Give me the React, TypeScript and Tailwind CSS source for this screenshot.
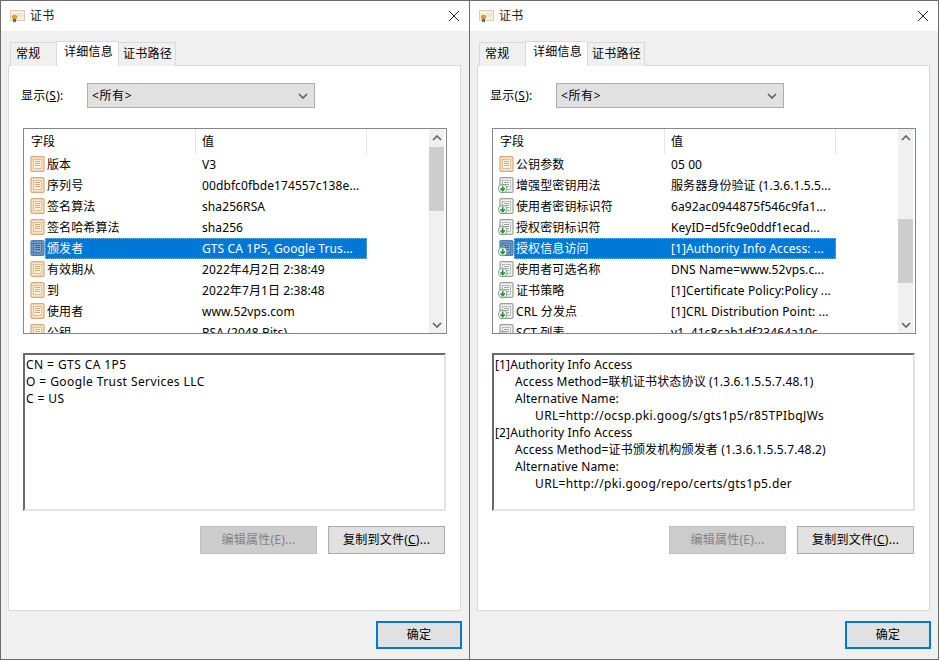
import React from "react";

type IconKind = "doc" | "ext";

function DocIcon({ kind, selected }: { kind: IconKind; selected?: boolean }) {
  const stroke = selected ? "#4a7fb5" : kind === "ext" ? "#9a9f9a" : "#d8a878";
  const fill = selected ? "#6a96c4" : kind === "ext" ? "#f0f1f0" : "#fbe3c6";
  const inner = selected ? "#7fa6cf" : kind === "ext" ? "#fafafa" : "#fff3e2";
  const line = selected ? "#2f5f8f" : kind === "ext" ? "#8f958f" : "#c8a070";
  return (
    <svg width="16" height="17" viewBox="0 0 16 17" className="block">
      <rect x="2" y="0.6" width="13" height="14.8" rx="1.2" fill={fill} stroke={stroke} strokeWidth="1.2" />
      <rect x="4.5" y="3.5" width="8" height="9" fill={inner} stroke={line} strokeWidth="0.6" />
      <path d="M6 5.5h5M6 7.5h5M6 9.5h5" stroke={line} strokeWidth="0.9" />
      {kind === "ext" && (
        <g>
          <circle cx="4.7" cy="11.5" r="4.2" fill="#fff" stroke="#6f8f78" strokeWidth="0.9" />
          <path d="M4.7 8.4v5M2.5 11.2l2.2 2.5 2.2-2.5" fill="none" stroke="#1e9a32" strokeWidth="1.6" />
        </g>
      )}
    </svg>
  );
}

function CertIcon() {
  return (
    <svg width="16" height="13" viewBox="0 0 16 13" className="block">
      <rect x="0.5" y="0.5" width="14" height="10" fill="#f8f1e3" stroke="#d8cdb8" />
      <path d="M7 4h6M7 6h6" stroke="#e2d8c6" />
      <circle cx="4.5" cy="7" r="2.6" fill="#e0a020" />
      <path d="M3 9v3.5l1.5-1 1.5 1V9" fill="#3d63b8" />
    </svg>
  );
}

type Row = { icon: IconKind; field: string; value: string; selected?: boolean };

const leftRows: Row[] = [
  { icon: "doc", field: "版本", value: "V3" },
  { icon: "doc", field: "序列号", value: "00dbfc0fbde174557c138e..." },
  { icon: "doc", field: "签名算法", value: "sha256RSA" },
  { icon: "doc", field: "签名哈希算法", value: "sha256" },
  { icon: "doc", field: "颁发者", value: "GTS CA 1P5, Google Trus...", selected: true },
  { icon: "doc", field: "有效期从", value: "2022年4月2日 2:38:49" },
  { icon: "doc", field: "到", value: "2022年7月1日 2:38:48" },
  { icon: "doc", field: "使用者", value: "www.52vps.com" },
  { icon: "doc", field: "公钥", value: "RSA (2048 Bits)" },
];

const rightRows: Row[] = [
  { icon: "doc", field: "公钥参数", value: "05 00" },
  { icon: "ext", field: "增强型密钥用法", value: "服务器身份验证 (1.3.6.1.5.5..." },
  { icon: "ext", field: "使用者密钥标识符", value: "6a92ac0944875f546c9fa1..." },
  { icon: "ext", field: "授权密钥标识符", value: "KeyID=d5fc9e0ddf1ecad..." },
  { icon: "ext", field: "授权信息访问", value: "[1]Authority Info Access: ...", selected: true },
  { icon: "ext", field: "使用者可选名称", value: "DNS Name=www.52vps.c..." },
  { icon: "ext", field: "证书策略", value: "[1]Certificate Policy:Policy ..." },
  { icon: "ext", field: "CRL 分发点", value: "[1]CRL Distribution Point: ..." },
  { icon: "ext", field: "SCT 列表", value: "v1, 41c8cab1df23464a10c..." },
];

function Tabs() {
  return (
    <div className="flex items-end h-[25px] pl-[2px] relative z-10 -mb-px">
      <div className="w-[47px] h-[24px] bg-[#f0f0f0] border border-b-0 border-[#d9d9d9] pl-[5px] pt-[2px]">常规</div>
      <div className="w-[63px] h-[25px] -ml-px bg-white border border-b-0 border-[#d9d9d9] pl-[7px] pt-[1px]">详细信息</div>
      <div className="w-[58px] h-[24px] -ml-px bg-[#f0f0f0] border border-b-0 border-[#d9d9d9] pl-[4px] pt-[2px]">证书路径</div>
    </div>
  );
}

function Chevron({ down }: { down?: boolean }) {
  return (
    <svg width="10" height="6" viewBox="0 0 10 6" className="block">
      <path d={down ? "M1 1l4 4 4-4" : "M1 5l4-4 4 4"} fill="none" stroke="#606060" strokeWidth="1.6" />
    </svg>
  );
}

function FieldList({ rows, thumb }: { rows: Row[]; thumb: string }) {
  return (
    <div className="flex w-[424px] h-[206px] border border-[#828790] bg-white tracking-[0.1px]">
      <div className="w-[405px] overflow-hidden">
        <div className="flex h-[25px] items-center">
          <div className="w-[172px] h-full border-r border-[#e5e5e5] pl-[7px] leading-[25px]">字段</div>
          <div className="w-[171px] h-full border-r border-[#e5e5e5] pl-[6px] leading-[25px]">值</div>
        </div>
        {rows.map((r) => (
          <div key={r.field} className="flex h-[21px] items-center">
            <div className="w-[21px] pl-[5px] shrink-0">
              <DocIcon kind={r.icon} selected={r.selected} />
            </div>
            <div
              className={
                r.selected
                  ? "flex w-[322px] h-[21px] leading-[21px] bg-[#0078d7] text-white outline-1 outline-dotted -outline-offset-1 outline-[#7fb8e6]"
                  : "flex w-[322px] h-[21px] leading-[21px]"
              }
            >
              <div className="w-[151px] pl-[2px] whitespace-nowrap">{r.field}</div>
              <div className="w-[171px] pl-[6px] whitespace-nowrap overflow-hidden">{r.value}</div>
            </div>
          </div>
        ))}
      </div>
      <div className="w-[15px] flex flex-col bg-[#f0f0f0] mr-[2px]">
        <div className="h-[17px] flex items-center justify-center shrink-0">
          <Chevron />
        </div>
        <div className="flex-1">
          <div className={thumb} />
        </div>
        <div className="h-[17px] flex items-center justify-center shrink-0">
          <Chevron down />
        </div>
      </div>
    </div>
  );
}

function Dialog({
  rows,
  thumb,
  detail,
  last,
}: {
  rows: Row[];
  thumb: string;
  detail: React.ReactNode;
  last?: boolean;
}) {
  return (
    <div
      className={
        last
          ? "w-[470px] h-[660px] flex flex-col border border-[#6b6b6b] bg-[#f0f0f0]"
          : "w-[469px] h-[660px] flex flex-col border border-r-0 border-[#6b6b6b] bg-[#f0f0f0]"
      }
    >
      <div className="h-[30px] bg-white flex items-center pl-[9px] shrink-0">
        <CertIcon />
        <span className="ml-[4px] text-[#1a1a1a]">证书</span>
        <svg width="12" height="12" viewBox="0 0 12 12" className="ml-auto mr-[9px]">
          <path d="M1 1l10 10M11 1L1 11" stroke="#222" strokeWidth="1" />
        </svg>
      </div>
      <div className="pl-[7px] pt-[10px] flex flex-col flex-1">
        <Tabs />
        <div className="w-[453px] h-[546px] bg-white border border-[#d9d9d9] pl-[14px] pt-[17px]">
          <div className="flex items-center h-[25px]">
            <div className="w-[66px] -ml-[2px]">
              显示(<u>S</u>):
            </div>
            <div className="w-[228px] h-[25px] bg-[#e1e1e1] border border-[#adadad] flex items-center pl-[4px] pr-[6px] justify-between">
              <span className="tracking-[0.6px]">&lt;所有&gt;</span>
              <Chevron down />
            </div>
          </div>
          <div className="mt-[20px]">
            <FieldList rows={rows} thumb={thumb} />
          </div>
          <div className="mt-[19px] w-[423px] h-[158px] bg-white border-2 border-t-[#696969] border-l-[#696969] border-r-[#e3e3e3] border-b-[#e3e3e3] pl-px pt-px leading-[17px]">
            {detail}
          </div>
          <div className="flex justify-end gap-[11px] w-[422px] mt-[15px]">
            <div className="w-[117px] h-[28px] bg-[#cccccc] border border-[#bfbfbf] text-[#838383] flex items-center justify-center">
              编辑属性(E)...
            </div>
            <div className="w-[117px] h-[28px] bg-[#e1e1e1] border border-[#adadad] flex items-center justify-center">
              <span>
                复制到文件(<u>C</u>)...
              </span>
            </div>
          </div>
        </div>
        <div className="flex w-[454px] justify-end mt-[10px]">
          <div className="w-[86px] h-[28px] bg-[#e1e1e1] border-2 border-[#0078d7] flex items-center justify-center">
            确定
          </div>
        </div>
      </div>
    </div>
  );
}

export default function App() {
  return (
    <div className="flex w-[940px] h-[660px] bg-white overflow-hidden text-[12px] text-black tracking-[0.25px] font-['Noto_Sans','Noto_Sans_CJK_SC',sans-serif]">
      <Dialog
        rows={leftRows}
        thumb="mt-px h-[64px] bg-[#cdcdcd]"
        detail={
          <div className="tracking-[0.42px]">
            <div>CN = GTS CA 1P5</div>
            <div>O = Google Trust Services LLC</div>
            <div>C = US</div>
          </div>
        }
      />
      <Dialog
        last
        rows={rightRows}
        thumb="mt-[73px] h-[64px] bg-[#cdcdcd]"
        detail={
          <div className="tracking-[0.15px]">
            <div>[1]Authority Info Access</div>
            <div className="pl-[20px]">Access Method=联机证书状态协议 (1.3.6.1.5.5.7.48.1)</div>
            <div className="pl-[20px]">Alternative Name:</div>
            <div className="pl-[40px] tracking-[0.36px]">URL=http://ocsp.pki.goog/s/gts1p5/r85TPIbqJWs</div>
            <div>[2]Authority Info Access</div>
            <div className="pl-[20px]">Access Method=证书颁发机构颁发者 (1.3.6.1.5.5.7.48.2)</div>
            <div className="pl-[20px]">Alternative Name:</div>
            <div className="pl-[40px] tracking-[0.36px]">URL=http://pki.goog/repo/certs/gts1p5.der</div>
          </div>
        }
      />
    </div>
  );
}
